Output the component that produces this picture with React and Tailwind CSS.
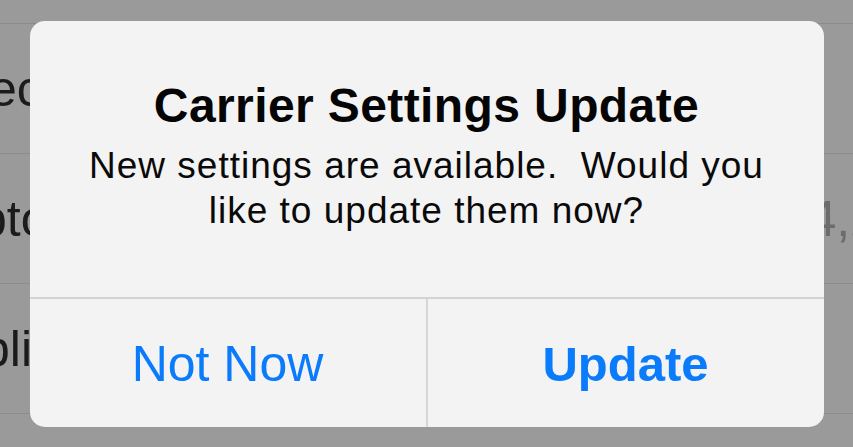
import React from 'react'

const rows = [
    { left: 'ected', offset: 'ml-[-11px]' },
    { left: 'ptor', offset: 'ml-[-21px]', right: '4,2' },
    { left: 'blic', offset: 'ml-[-18px]' },
]

export default function App() {
    return (
        <div className="relative w-[853px] h-[447px] overflow-hidden bg-[#9a9a9a] font-['Liberation_Sans',Arial,sans-serif]">
            {/* dimmed settings list behind the alert */}
            <div className="flex flex-col pt-[23px]">
                {rows.map((row, i) => (
                    <div key={i} className="flex h-[130px] items-center justify-between border-t border-[#8b8b8b]">
                        <span className={`${row.offset} text-[50px] leading-none text-[#1b1b1b]`}>{row.left}</span>
                        {row.right ? (
                            <span className="mr-[-25px] text-[50px] leading-none text-[#6c6c6c]">{row.right}</span>
                        ) : null}
                    </div>
                ))}
                <div className="h-[40px] border-t border-[#8b8b8b]"></div>
            </div>

            {/* alert */}
            <div className="absolute inset-0 flex items-center justify-center">
                <div className="flex flex-col w-[794px] h-[406px] rounded-[15px] bg-[#f3f3f3] overflow-hidden">
                    <div className="flex flex-col items-center h-[276px] pt-[61px]">
                        <h1 className="text-[48px] leading-none font-bold tracking-[0.4px] text-[#050505]">
                            Carrier Settings Update
                        </h1>
                        <p className="mt-[13px] text-center text-[37px] leading-[45px] tracking-[1px] text-[#0a0a0a] whitespace-pre">
                            {'New settings are available.  Would you\nlike to update them now?'}
                        </p>
                    </div>
                    <div className="flex flex-1 border-t-2 border-[#d3d3d3]">
                        <button type="button" className="flex flex-1 items-center justify-center pt-[3px] text-[50px] leading-none text-[#0a7bfb] border-r-2 border-[#d6d6d6]">
                            Not Now
                        </button>
                        <button type="button" className="flex flex-1 items-center justify-center pt-[3px] text-[49px] leading-none font-bold text-[#0a7bfb]">
                            Update
                        </button>
                    </div>
                </div>
            </div>
        </div>
    )
}
